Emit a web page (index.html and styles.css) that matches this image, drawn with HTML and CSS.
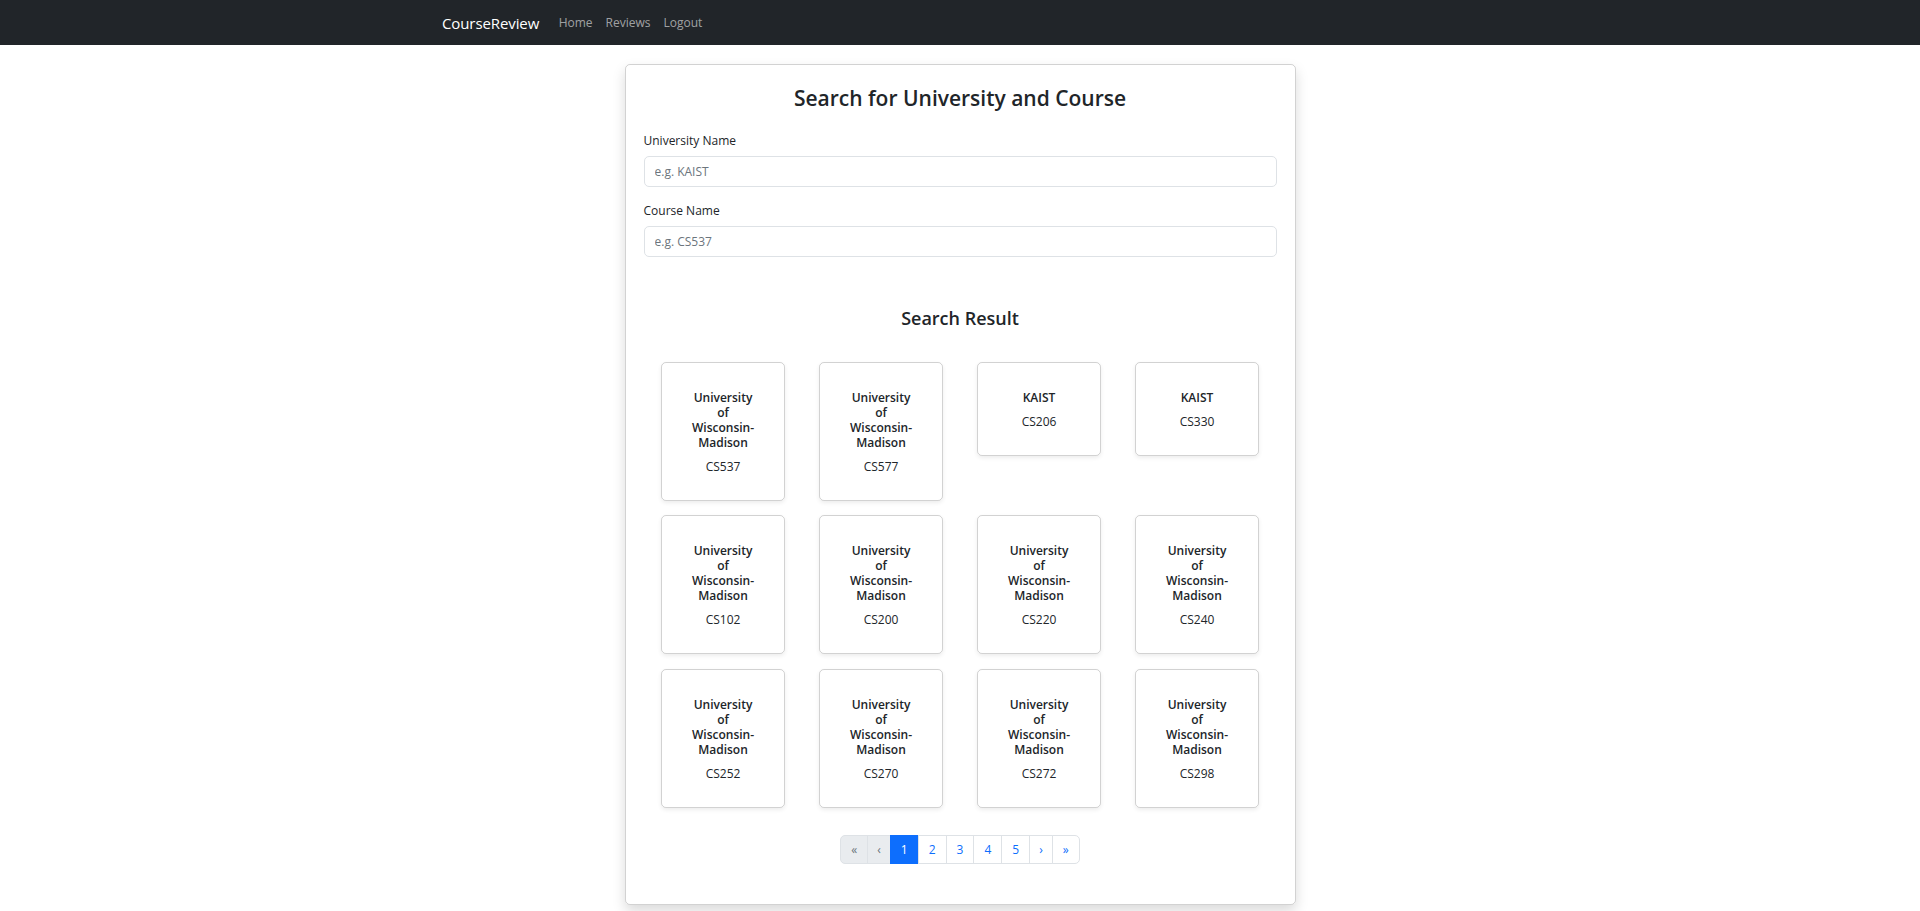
FILE: index.html
```html
<!DOCTYPE html>
<html lang="en">
<head>
<meta charset="utf-8">
<title>CourseReview</title>
<link rel="stylesheet" href="styles.css">
</head>
<body>
<nav class="navbar">
  <div class="nav-inner">
    <a class="brand" href="#">CourseReview</a>
    <a class="nav-link" href="#">Home</a>
    <a class="nav-link" href="#">Reviews</a>
    <a class="nav-link" href="#">Logout</a>
  </div>
</nav>
<main class="panel">
  <h3 class="title">Search for University and Course</h3>
  <label class="label" for="uni">University Name</label>
  <input class="input" id="uni" placeholder="e.g. KAIST">
  <label class="label" for="course">Course Name</label>
  <input class="input" id="course" placeholder="e.g. CS537">
  <h4 class="subtitle">Search Result</h4>
  <div class="grid">
    <div class="card"><div class="card-title">University of Wisconsin-Madison</div><div class="card-text">CS537</div></div>
    <div class="card"><div class="card-title">University of Wisconsin-Madison</div><div class="card-text">CS577</div></div>
    <div class="card"><div class="card-title">KAIST</div><div class="card-text">CS206</div></div>
    <div class="card"><div class="card-title">KAIST</div><div class="card-text">CS330</div></div>
    <div class="card"><div class="card-title">University of Wisconsin-Madison</div><div class="card-text">CS102</div></div>
    <div class="card"><div class="card-title">University of Wisconsin-Madison</div><div class="card-text">CS200</div></div>
    <div class="card"><div class="card-title">University of Wisconsin-Madison</div><div class="card-text">CS220</div></div>
    <div class="card"><div class="card-title">University of Wisconsin-Madison</div><div class="card-text">CS240</div></div>
    <div class="card"><div class="card-title">University of Wisconsin-Madison</div><div class="card-text">CS252</div></div>
    <div class="card"><div class="card-title">University of Wisconsin-Madison</div><div class="card-text">CS270</div></div>
    <div class="card"><div class="card-title">University of Wisconsin-Madison</div><div class="card-text">CS272</div></div>
    <div class="card"><div class="card-title">University of Wisconsin-Madison</div><div class="card-text">CS298</div></div>
  </div>
  <ul class="pagination">
    <li class="page disabled">&laquo;</li>
    <li class="page disabled narrow">&lsaquo;</li>
    <li class="page active">1</li>
    <li class="page">2</li>
    <li class="page">3</li>
    <li class="page">4</li>
    <li class="page">5</li>
    <li class="page narrow">&rsaquo;</li>
    <li class="page">&raquo;</li>
  </ul>
</main>
</body>
</html>
```
FILE: styles.css
```css
* { box-sizing: border-box; }
html, body { margin: 0; padding: 0; background: #fff; }
body {
  font-family: "Open Sans", "Noto Sans", sans-serif;
  color: #212529;
  font-size: 12px;
}
.navbar {
  height: 45px;
  background: #212529;
}
.nav-inner {
  width: 1056px;
  margin: 0 auto;
  padding: 0 10px;
  height: 100%;
  display: flex;
  align-items: center;
}
.brand {
  color: #fff;
  text-decoration: none;
  font-size: 15px;
  margin-right: 13px;
  letter-spacing: -0.1px;
}
.nav-link {
  color: rgba(255,255,255,.58);
  text-decoration: none;
  font-size: 12px;
  padding: 0 6.5px;
}
.panel {
  width: 671px;
  margin: 19px auto 19px;
  border: 1px solid rgba(0,0,0,.175);
  border-radius: 5px;
  box-shadow: 0 6px 13px rgba(0,0,0,.15);
  padding: 20px 18px 20px;
  display: flex;
  flex-direction: column;
}
.title {
  margin: 0 0 19px;
  text-align: center;
  font-size: 21px;
  line-height: 27px;
  font-weight: 600;
}
.label {
  display: block;
  line-height: 19px;
  margin-bottom: 6px;
}
.input {
  display: block;
  width: 100%;
  height: 31px;
  border: 1px solid #dee2e6;
  border-radius: 5px;
  padding: 0 10px;
  font-family: inherit;
  font-size: 12px;
  color: #212529;
  margin-bottom: 13.5px;
}
.input::placeholder { color: #6c757d; }
.subtitle {
  margin: 37px 0 31.5px;
  text-align: center;
  font-size: 18px;
  line-height: 23px;
  font-weight: 600;
}
.grid {
  display: grid;
  grid-template-columns: repeat(4, 124.5px);
  column-gap: 33.5px;
  row-gap: 14.5px;
  justify-content: center;
  align-items: start;
}
.card {
  border: 1px solid rgba(0,0,0,.175);
  border-radius: 5px;
  box-shadow: 0 2px 4px rgba(0,0,0,.075);
  padding: 27px 27px 24px;
  text-align: center;
}
.card-title {
  font-weight: 600;
  font-size: 12px;
  line-height: 15px;
  margin-bottom: 7px;
}
.card-text {
  line-height: 19px;
}
.pagination {
  list-style: none;
  margin: 27.5px auto 20px;
  padding: 0;
  display: flex;
}
.page {
  height: 29px;
  line-height: 27px;
  padding: 0 10px;
  border: 1px solid #dee2e6;
  margin-left: -1px;
  color: #0d6efd;
  background: #fff;
  font-size: 12px;
}
.page:first-child { margin-left: 0; border-radius: 5px 0 0 5px; }
.page:last-child { border-radius: 0 5px 5px 0; }
.page.narrow { padding: 0 9px; }
.page.disabled { background: #e9ecef; color: #6c757d; }
.page.active { background: #0d6efd; border-color: #0d6efd; color: #fff; }
```
